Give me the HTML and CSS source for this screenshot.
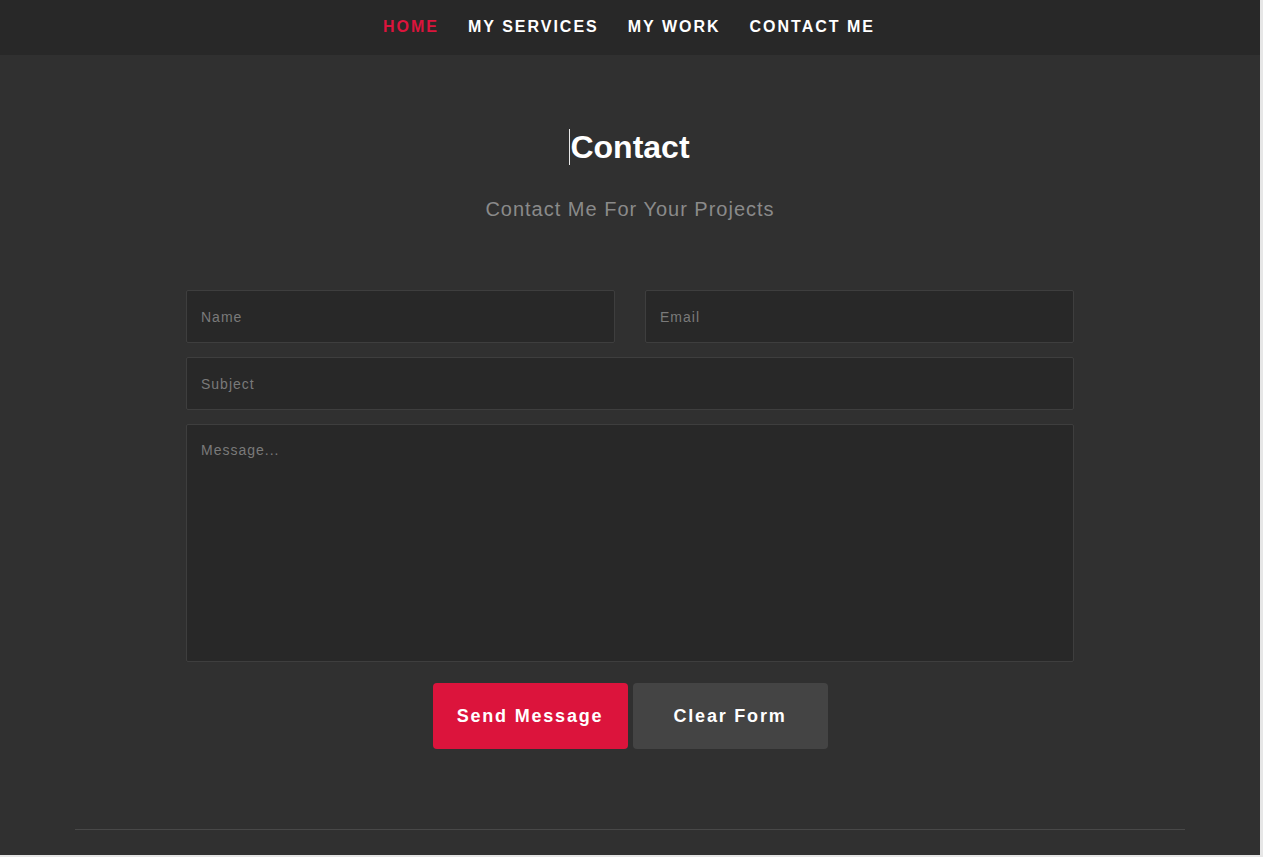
FILE: index.html
```html
<!DOCTYPE html>
<html lang="en">
<head>
<meta charset="utf-8">
<title>Contact</title>
<link rel="stylesheet" href="styles.css">
</head>
<body>
<header class="topbar">
  <nav class="menu">
    <a class="menu-link active" href="#">HOME</a>
    <a class="menu-link" href="#">MY SERVICES</a>
    <a class="menu-link" href="#">MY WORK</a>
    <a class="menu-link" href="#">CONTACT ME</a>
  </nav>
</header>
<main class="contact">
  <h1 class="contact-title"><span class="caret"></span>Contact</h1>
  <p class="contact-sub">Contact Me For Your Projects</p>
  <form class="contact-form">
    <div class="row-two">
      <input class="field" type="text" placeholder="Name">
      <input class="field" type="email" placeholder="Email">
    </div>
    <input class="field" type="text" placeholder="Subject">
    <textarea class="field area" placeholder="Message..."></textarea>
    <div class="actions">
      <button class="btn btn-send" type="button">Send Message</button>
      <button class="btn btn-clear" type="reset">Clear Form</button>
    </div>
  </form>
  <div class="divider"></div>
</main>
</body>
</html>
```
FILE: styles.css
```css
html {
  background: #e6e6e6;
}
body {
  margin: 0 3px 0 0;
  background: #303030;
  font-family: "Liberation Sans", Arial, sans-serif;
  color: #fff;
  min-height: 855px;
}
.topbar {
  background: #282828;
  height: 55px;
  display: flex;
  justify-content: center;
  align-items: center;
}
.menu {
  display: flex;
  gap: 29px;
  padding-bottom: 1px;
  padding-right: 2px;
}
.menu-link {
  color: #fff;
  text-decoration: none;
  font-weight: 700;
  font-size: 16px;
  letter-spacing: 2px;
}
.menu-link.active {
  color: #dc143c;
}
.contact {
  padding-top: 73px;
  display: flex;
  flex-direction: column;
  align-items: center;
}
.contact-title {
  margin: 0 0 31px;
  font-size: 32px;
  line-height: 38px;
  font-weight: 700;
  position: relative;
}
.caret {
  position: absolute;
  left: -1px;
  top: 1px;
  width: 1px;
  height: 36px;
  background: #e8e8e8;
}
.contact-sub {
  margin: 0 0 69px;
  font-size: 20px;
  line-height: 24px;
  color: #8a8a8a;
  letter-spacing: 1px;
}
.contact-form {
  width: 888px;
  display: flex;
  flex-direction: column;
  gap: 14px;
}
.row-two {
  display: flex;
  gap: 30px;
}
.field {
  box-sizing: border-box;
  width: 100%;
  height: 53px;
  background: #282828;
  border: 1px solid #3e3e3e;
  border-radius: 2px;
  padding: 0 14px;
  font-family: "Liberation Sans", Arial, sans-serif;
  font-size: 14px;
  letter-spacing: 1px;
  color: #ddd;
  outline: none;
}
.field::placeholder {
  color: #7a7a7a;
}
.area {
  height: 238px;
  padding: 17px 14px;
  resize: none;
  display: block;
}
.actions {
  display: flex;
  justify-content: center;
  gap: 5px;
  margin-top: 7px;
}
.btn {
  width: 195px;
  height: 66px;
  border: none;
  border-radius: 4px;
  color: #fff;
  font-family: "Liberation Sans", Arial, sans-serif;
  font-weight: 700;
  font-size: 18px;
  letter-spacing: 1.8px;
  cursor: pointer;
}
.btn-send {
  background: #dc143c;
}
.btn-clear {
  background: #444;
}
.divider {
  width: 1110px;
  height: 1px;
  background: #484848;
  margin-top: 80px;
}
```
